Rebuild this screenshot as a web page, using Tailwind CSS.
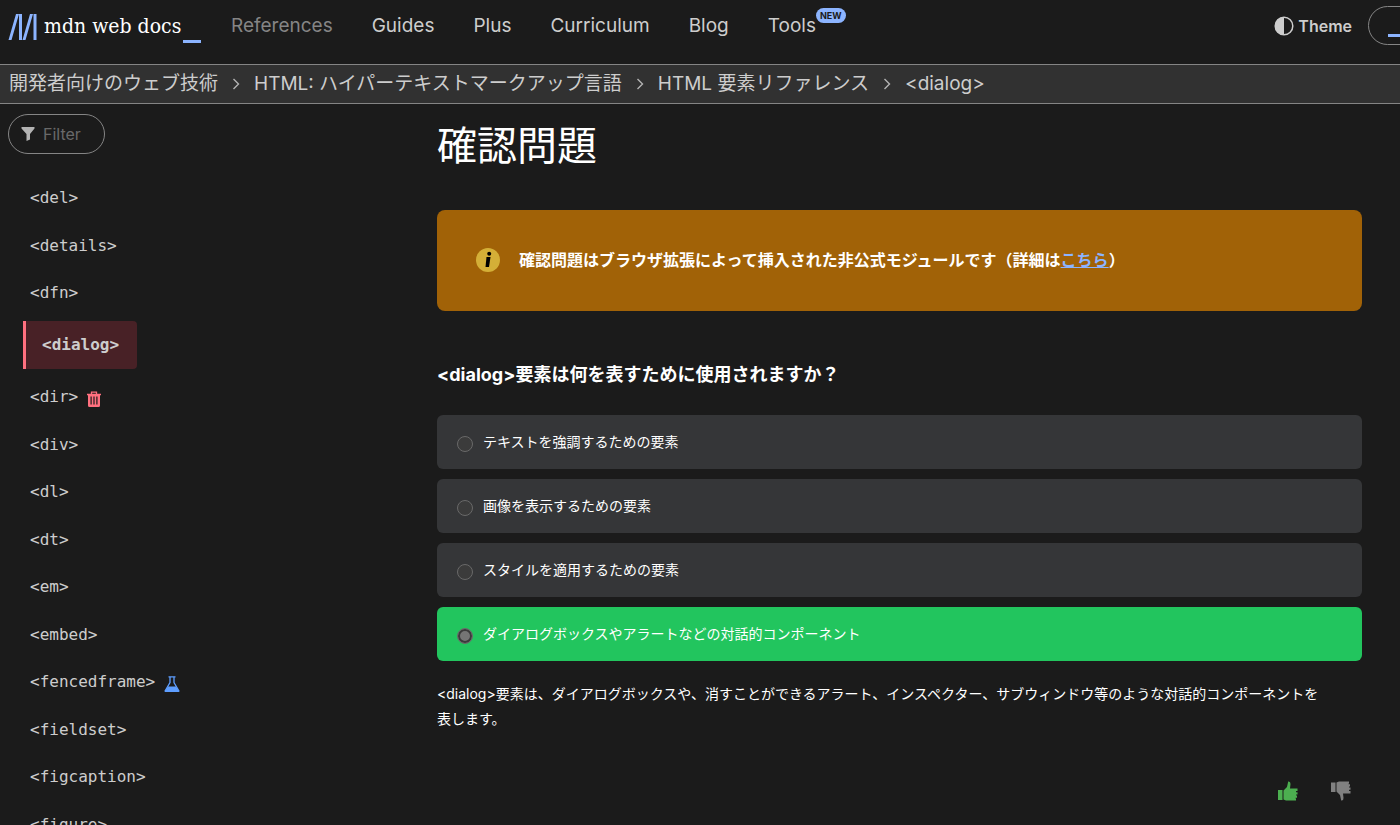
<!DOCTYPE html>
<html lang="ja">
<head>
<meta charset="utf-8">
<meta name="viewport" content="width=device-width, initial-scale=1">
<title>&lt;dialog&gt; - MDN Web Docs</title>
<script src="https://cdn.jsdelivr.net/npm/@tailwindcss/browser@4"></script>
</head>
<body class="flex h-screen flex-col overflow-hidden bg-[#1b1b1b] font-['Inter','Noto_Sans_CJK_JP',sans-serif] text-white">
<header class="flex h-16 shrink-0 items-start overflow-hidden pl-2 text-[#cdcdcd]">
  <a href="#" aria-label="MDN Web Docs" class="flex h-[53px] w-[193px] shrink-0 items-center text-white">
    <svg class="h-[26px] w-[30px] shrink-0" viewBox="0 0 30 26" fill="#8cb4ff"><path d="M8 0h3L3.500 26H.5zM11 0h3v26h-3zM22 0h3l-7.500 26h-3zM25.500 0h3v26h-3z"/></svg>
    <span class="pl-1.5 font-['DejaVu_Serif_Condensed','DejaVu_Serif',serif] text-[21px] whitespace-nowrap">mdn web docs</span>
    <span class="mb-2.5 ml-0.5 h-[3px] w-[18px] shrink-0 self-end bg-[#8cb4ff]"></span>
  </a>
  <nav class="flex h-[53px] items-center gap-[39px] pl-[30px] text-[19px]">
    <a href="#" class="text-[#858585]">References</a>
    <a href="#">Guides</a>
    <a href="#">Plus</a>
    <a href="#">Curriculum</a>
    <a href="#">Blog</a>
    <a href="#" class="relative">Tools<span class="absolute -top-1 left-full h-[15px] rounded-full bg-[#8cb4ff] px-1 text-[9px] leading-[15px] font-bold text-[#1b1b1b]">NEW</span></a>
  </nav>
  <button class="ml-auto flex h-[51px] items-center gap-1 text-[16px] font-semibold">
    <svg class="size-5" viewBox="0 0 20 20"><circle cx="10" cy="10" r="8.800" fill="none" stroke="#cdcdcd" stroke-width="1.500"/><path d="M10 1a9 9 0 0 0 0 18z" fill="#cdcdcd"/></svg>
    Theme
  </button>
  <button aria-label="Menu" class="mt-1.5 -mr-12 ml-4 flex h-[39px] w-20 shrink-0 items-end rounded-full border border-[#858585] pb-[7px] pl-[19px]"><span class="h-[3px] w-5 bg-[#8cb4ff]"></span></button>
</header>
<nav aria-label="Breadcrumb" class="h-10 shrink-0 border-y border-[#858585] bg-[#313131] text-[#cdcdcd]">
  <ol class="flex h-full items-center gap-3.5 pl-[9px] text-[19px] whitespace-nowrap">
    <li><a href="#">開発者向けのウェブ技術</a></li>
    <li aria-hidden="true"><svg class="h-3 w-2" viewBox="0 0 8 12" fill="none" stroke="#b3b3b3" stroke-width="1.400"><path d="M1.500 1l5 5-5 5"/></svg></li>
    <li><a href="#">HTML: ハイパーテキストマークアップ言語</a></li>
    <li aria-hidden="true"><svg class="h-3 w-2" viewBox="0 0 8 12" fill="none" stroke="#b3b3b3" stroke-width="1.400"><path d="M1.500 1l5 5-5 5"/></svg></li>
    <li><a href="#">HTML 要素リファレンス</a></li>
    <li aria-hidden="true"><svg class="h-3 w-2" viewBox="0 0 8 12" fill="none" stroke="#b3b3b3" stroke-width="1.400"><path d="M1.500 1l5 5-5 5"/></svg></li>
    <li><a href="#">&lt;dialog&gt;</a></li>
  </ol>
</nav>
<div class="flex min-h-0 flex-1">
  <aside class="w-[437px] shrink-0 overflow-hidden pt-2.5 pl-2">
    <label class="flex h-10 w-[97px] items-center gap-2 rounded-full border border-[#858585] pl-3">
      <svg class="h-4 w-3.5 shrink-0" viewBox="0 0 14 16" fill="#b3b3b3"><path d="M.5 1h13v1.500L9 8v5.500L5.500 15V8L.5 2.500z"/></svg>
      <input type="text" aria-label="Filter" placeholder="Filter" class="w-14 bg-transparent text-[16px] outline-none placeholder:text-[#696969]">
    </label>
    <ul class="mt-5 pl-[15px] font-['DejaVu_Sans_Mono',monospace] text-[16px] text-[#cdcdcd]">
      <li class="flex items-center pl-[7px] odd:h-12 even:h-[47px]"><a href="#">&lt;del&gt;</a></li>
      <li class="flex items-center pl-[7px] odd:h-12 even:h-[47px]"><a href="#">&lt;details&gt;</a></li>
      <li class="flex items-center pl-[7px] odd:h-12 even:h-[47px]"><a href="#">&lt;dfn&gt;</a></li>
      <li class="my-1 flex h-12 w-[114px] items-center rounded-r border-l-[3px] border-[#ff707f] bg-[#482126] pl-4 font-bold"><a href="#" aria-current="page">&lt;dialog&gt;</a></li>
      <li class="flex items-center gap-[9px] pl-[7px] odd:h-12 even:h-[47px]"><a href="#">&lt;dir&gt;</a>
        <svg class="mt-1 h-4 w-3.5" viewBox="0 0 14 16" role="img" aria-label="Deprecated"><path fill="none" stroke="#ff707f" stroke-width="1.300" d="M4.500 3V1.200h5V3"/><path fill="#ff707f" fill-rule="evenodd" d="M0 2.700h14v1.500h-1V14.500q0 1.500-1.500 1.500h-9Q1 16 1 14.500V4.200H0zM3.500 5.500v8h1.200v-8zM6.400 5.500v8h1.200v-8zM9.300 5.500v8h1.200v-8z"/></svg></li>
      <li class="flex items-center pl-[7px] odd:h-12 even:h-[47px]"><a href="#">&lt;div&gt;</a></li>
      <li class="flex items-center pl-[7px] odd:h-12 even:h-[47px]"><a href="#">&lt;dl&gt;</a></li>
      <li class="flex items-center pl-[7px] odd:h-12 even:h-[47px]"><a href="#">&lt;dt&gt;</a></li>
      <li class="flex items-center pl-[7px] odd:h-12 even:h-[47px]"><a href="#">&lt;em&gt;</a></li>
      <li class="flex items-center pl-[7px] odd:h-12 even:h-[47px]"><a href="#">&lt;embed&gt;</a></li>
      <li class="flex items-center gap-[9px] pl-[7px] odd:h-12 even:h-[47px]"><a href="#">&lt;fencedframe&gt;</a>
        <svg class="mt-1 h-4 w-4" viewBox="0 0 16 16" role="img" aria-label="Experimental"><path fill="none" stroke="#5e9eff" stroke-width="1.300" d="M4.500 .8h7M6 1v5.500L1.300 14.500h13.400L10 6.500V1"/><path fill="#5e9eff" d="M4 10.500h8l3.500 5.500H.5z"/></svg></li>
      <li class="flex items-center pl-[7px] odd:h-12 even:h-[47px]"><a href="#">&lt;fieldset&gt;</a></li>
      <li class="flex items-center pl-[7px] odd:h-12 even:h-[47px]"><a href="#">&lt;figcaption&gt;</a></li>
      <li class="flex items-center pl-[7px] odd:h-12 even:h-[47px]"><a href="#">&lt;figure&gt;</a></li>
    </ul>
  </aside>
  <main class="min-w-0 flex-1 overflow-hidden pt-4 pr-[38px]">
    <h1 class="text-[40px] leading-[52px]">確認問題</h1>
    <div class="mt-[38px] flex h-[101px] items-center gap-[19px] rounded-lg bg-[#a16207] pb-0.5 pl-[39px] font-bold">
      <svg class="size-6 shrink-0" viewBox="0 0 24 24" aria-hidden="true"><circle cx="12" cy="12" r="12" fill="#d4af37"/><path d="M10.500 9h4L13 19H9.500z"/><circle cx="13.200" cy="5.800" r="2"/></svg>
      <p class="text-[16px]">確認問題はブラウザ拡張によって挿入された非公式モジュールです（詳細は<a href="#" class="text-[#8cb4ff] underline">こちら</a>）</p>
    </div>
    <fieldset class="mt-[50px]">
      <legend class="text-[18px] leading-7 font-bold">&lt;dialog&gt;要素は何を表すために使用されますか？</legend>
      <div class="flex flex-col gap-2.5 pt-[26px] text-[14px]">
        <label class="flex h-[54px] items-center gap-2.5 rounded-md bg-[#353638] pb-0.5 pl-5"><input type="radio" name="answer" class="mt-[5px] size-4 appearance-none rounded-full border border-[#696969] bg-[#3b3b3b]">テキストを強調するための要素</label>
        <label class="flex h-[54px] items-center gap-2.5 rounded-md bg-[#353638] pb-0.5 pl-5"><input type="radio" name="answer" class="mt-[5px] size-4 appearance-none rounded-full border border-[#696969] bg-[#3b3b3b]">画像を表示するための要素</label>
        <label class="flex h-[54px] items-center gap-2.5 rounded-md bg-[#353638] pb-0.5 pl-5"><input type="radio" name="answer" class="mt-[5px] size-4 appearance-none rounded-full border border-[#696969] bg-[#3b3b3b]">スタイルを適用するための要素</label>
        <label class="flex h-[54px] items-center gap-2.5 rounded-md bg-[#22c55e] pb-0.5 pl-5"><input type="radio" name="answer" checked class="mt-[5px] size-4 appearance-none rounded-full border border-[#696969] bg-[#757575] ring-2 ring-[#3b3b3b] ring-inset">ダイアログボックスやアラートなどの対話的コンポーネント</label>
      </div>
    </fieldset>
    <p class="mt-5 pr-8 text-[14px] leading-[25px]">&lt;dialog&gt;要素は、ダイアログボックスや、消すことができるアラート、インスペクター、サブウィンドウ等のような対話的コンポーネントを表します。</p>
    <div class="mt-[50px] flex justify-end gap-[33px] pr-[11px]">
      <button aria-label="Good"><svg class="size-5" viewBox="0 0 20 20" fill="#4caf50"><path d="M0 9h4.500v10H0zM5.500 9.500L9 6l1.200-5.500Q12.500 0 12.500 3L12 7.500h7.500V10H18v1.200h1.500V13.500H18v1h1v2.200h-1.500v.8h.5v2H8L5.500 18.500z"/></svg></button>
      <button aria-label="Bad"><svg class="size-5" viewBox="0 0 20 20" fill="#808080"><path d="M0 1.500h4.500v9.500H0zM5.500 1.500L8 .5h10v2h-.5v.8H19v2.200h-1v1h1.500V8.800H18V10h1.500v2.500H12l.5 4.500q0 3-2.300 2.500L9 14l-3.500-3.500z"/></svg></button>
    </div>
  </main>
</div>
</body>
</html>
